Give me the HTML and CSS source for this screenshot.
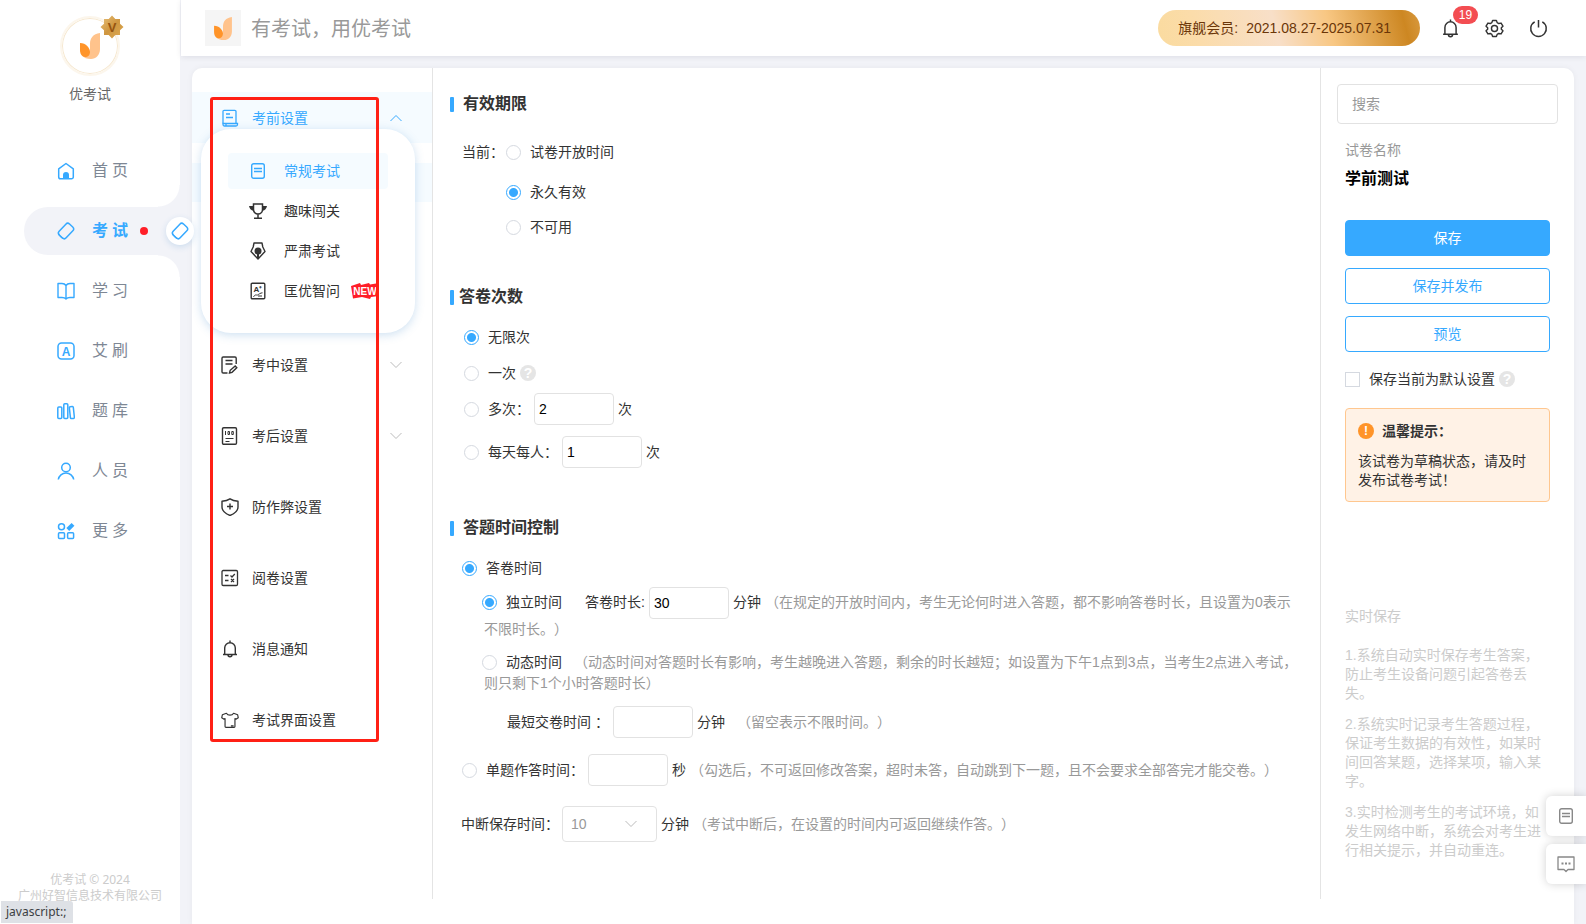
FILE: index.html
```html
<!DOCTYPE html>
<html lang="zh-CN">
<head>
<meta charset="utf-8">
<title>优考试 - 考试设置</title>
<link rel="stylesheet" href="styles.css">
</head>
<body>
<svg class="defs" aria-hidden="true">
  <defs>
    <symbol id="leaf" viewBox="0 0 22 28">
      <path fill="#ffc38c" d="M21 1V17C21 23 17 27 12 27C8 27 5 26 3 23C9 25 11 23 11 17V12C11 6 14 2 21 1Z"/>
      <path fill="#ff9429" d="M1 11C7 11 11 16 11 20C11 23 9 25 6 25C3 25 1 22 1 18Z"/>
    </symbol>
    <symbol id="eraser" viewBox="0 0 18 18">
      <rect x="1.500" y="4.200" width="15" height="9.600" rx="2.600" fill="none" stroke="currentColor" stroke-width="1.500" transform="rotate(-47 9 9)"/>
      <path fill="currentColor" d="M1.600 10c-.9 1.200-.8 2.600.2 3.600l2.400 2.500c1 1 2.500 1.100 3.600.2-3-.8-5.400-3.200-6.200-6.300z"/>
    </symbol>
    <symbol id="bell" viewBox="0 0 18 18">
      <path fill="none" stroke="currentColor" stroke-width="1.400" stroke-linejoin="round" d="M2 14.500h14M3.700 14.300V8a5.300 5.300 0 0 1 10.600 0v6.300M9 .5v2M7 14.800a2 2 0 0 0 4 0"/>
    </symbol>
    <symbol id="sheet" viewBox="0 0 16 18">
      <rect x="1.700" y="1.700" width="12.600" height="14.600" rx="2" fill="none" stroke="currentColor" stroke-width="1.400"/>
      <path stroke="currentColor" stroke-width="1.400" d="M4 6.500h8M4 9.500h8"/>
    </symbol>
    <symbol id="down" viewBox="0 0 12 8">
      <path fill="none" stroke="currentColor" d="M.5 1 6 6.500 11.500 1"/>
    </symbol>
  </defs>
</svg>

<div class="app">
  <aside class="sidebar">
    <div class="profile">
      <div class="avatar">
        <svg class="avatar-logo"><use href="#leaf"/></svg>
        <svg class="medal" viewBox="0 0 24 24">
          <defs><linearGradient id="gold" x1="0" y1="0" x2="1" y2="1"><stop offset="0" stop-color="#e9c27a"/><stop offset=".5" stop-color="#cf9640"/><stop offset="1" stop-color="#dca951"/></linearGradient></defs>
          <path fill="url(#gold)" d="M12 .5l3.300 3.500h4.700v4.700l3.500 3.300-3.500 3.300v4.700h-4.700L12 23.500 8.700 20H4v-4.700L.5 12 4 8.700V4h4.700z"/>
          <text x="12" y="17" text-anchor="middle" class="medal-text">V</text>
        </svg>
      </div>
      <div class="profile-name">优考试</div>
    </div>
    <nav class="nav">
      <a class="nav-item" href="#"><svg viewBox="0 0 18 18"><path fill="none" stroke="currentColor" stroke-width="1.500" stroke-linejoin="round" d="M1.700 6.800 9 1.500l7.300 5.300v8.200a1.800 1.800 0 0 1-1.800 1.800h-11a1.800 1.800 0 0 1-1.800-1.800z"/><path fill="currentColor" d="M6 17v-4a3 3 0 0 1 6 0v4z"/></svg><span>首页</span></a>
      <a class="nav-item active" href="#"><svg><use href="#eraser"/></svg><span>考试</span><i class="dot"></i><b class="knob"><svg><use href="#eraser"/></svg></b></a>
      <a class="nav-item" href="#"><svg viewBox="0 0 18 18"><path fill="none" stroke="currentColor" stroke-width="1.400" stroke-linejoin="round" d="M9 3.500C8 2 6.500 1.500 5 1.500H1v14h4c1.500 0 3 .3 4 1.500 1-1.200 2.500-1.500 4-1.500h4v-14h-4c-1.500 0-3 .5-4 2zM9 3.500V17"/></svg><span>学习</span></a>
      <a class="nav-item" href="#"><svg viewBox="0 0 18 18"><rect x="1" y="1" width="16" height="16" rx="3.500" fill="none" stroke="currentColor" stroke-width="1.500"/><text x="9" y="13.500" text-anchor="middle" class="letter-a">A</text></svg><span>艾刷</span></a>
      <a class="nav-item" href="#"><svg viewBox="0 0 18 18"><g fill="none" stroke="currentColor" stroke-width="1.500"><rect x=".8" y="5" width="4" height="11.500" rx="1"/><rect x="6.800" y="1.800" width="4" height="14.700" rx="1"/><rect x="12.800" y="4.500" width="4" height="12" rx="1" transform="rotate(-6 15 10)"/></g></svg><span>题库</span></a>
      <a class="nav-item" href="#"><svg viewBox="0 0 18 18"><g fill="none" stroke="currentColor" stroke-width="1.500"><circle cx="9" cy="5.500" r="4.300"/><path d="M1.300 17.500a7.800 7.800 0 0 1 15.400 0"/></g></svg><span>人员</span></a>
      <a class="nav-item" href="#"><svg viewBox="0 0 18 18"><g fill="none" stroke="currentColor" stroke-width="1.500"><circle cx="4.500" cy="4.800" r="3"/><rect x="1.500" y="10.800" width="6" height="5.700" rx="1"/><rect x="10.600" y="10.800" width="6" height="5.700" rx="1"/></g><path stroke="currentColor" stroke-width="4" d="m10.800 7.500 5.200-5.200"/></svg><span>更多</span></a>
    </nav>
    <footer class="copyright">优考试 © 2024<br>广州好智信息技术有限公司</footer>
  </aside>

  <div class="page">
    <header class="topbar">
      <div class="brand-logo"><svg><use href="#leaf"/></svg></div>
      <h1 class="brand">有考试，用优考试</h1>
      <div class="member"><span>旗舰会员:</span><span>2021.08.27-2025.07.31</span></div>
      <button class="icon-btn" aria-label="通知"><svg><use href="#bell"/></svg><span class="count">19</span></button>
      <button class="icon-btn" aria-label="设置"><svg viewBox="0 0 20 20"><g fill="none" stroke="currentColor" stroke-width="1.500" stroke-linejoin="round"><path d="M8 1.500h4l.8 2.300 1.700 1 2.400-.5 2 3.300-1.700 1.700v1.400l1.700 1.700-2 3.300-2.400-.5-1.700 1-.8 2.300H8l-.8-2.300-1.700-1-2.400.5-2-3.300 1.700-1.700V9.300L1.100 7.600l2-3.300 2.400.5 1.700-1z"/><circle cx="10" cy="10" r="3.200"/></g></svg></button>
      <button class="icon-btn" aria-label="退出"><svg viewBox="0 0 20 20"><path fill="none" stroke="currentColor" stroke-width="1.600" d="M6 3a8.200 8.200 0 1 0 8 0M10 1v8"/></svg></button>
    </header>

    <main class="card">
      <aside class="menu">
        <a class="menu-item open" href="#"><svg viewBox="0 0 18 18"><g fill="none" stroke="currentColor" stroke-width="1.300"><path d="M2 14.500V2.500A1.200 1.200 0 0 1 3.200 1.300h10.600A1.200 1.200 0 0 1 15 2.500v12"/><path d="M5 5h4M5 8.500h7M2 14.500h14.500v1a1.500 1.500 0 0 1-1.500 1.500H3.500A1.500 1.500 0 0 1 2 15.500zM5 14.500v2.500"/></g></svg><span>考前设置</span><svg class="chev up"><use href="#down"/></svg></a>
        <div class="submenu"><div class="submenu-row"></div></div>
        <a class="menu-item" href="#"><svg viewBox="0 0 18 18"><g fill="none" stroke="currentColor" stroke-width="1.400"><path d="M15.200 8V2.200A1.200 1.200 0 0 0 14 1H2.200A1.200 1.200 0 0 0 1 2.200v13.600A1.200 1.200 0 0 0 2.200 17h4.300M4.500 4.500h7M4.500 8h7"/><path d="m8.500 17 .7-2.700 5-4.300 1.600 1.700-4.800 4.600z"/></g></svg><span>考中设置</span><svg class="chev"><use href="#down"/></svg></a>
        <a class="menu-item" href="#"><svg viewBox="0 0 18 18"><g fill="none" stroke="currentColor"><rect x="1.500" y=".7" width="14" height="16.600" rx="1.200" stroke-width="1.400"/><path d="M4.500 4v4M7 4.500h1.500v3H7zM10.800 4.500h1.500v3h-1.500zM4.500 11.500h8M4.500 14.500h4"/></g></svg><span>考后设置</span><svg class="chev"><use href="#down"/></svg></a>
        <a class="menu-item" href="#"><svg viewBox="0 0 18 18"><g fill="none" stroke="currentColor" stroke-width="1.400" stroke-linejoin="round"><path d="M9 .8C6.500 2.500 4 3 1 3.200V9c0 4.200 3.500 6.700 8 8.500 4.500-1.800 8-4.300 8-8.500V3.200C14 3 11.500 2.500 9 .8zM9 5.500v6M6 8.500h6"/></g></svg><span>防作弊设置</span></a>
        <a class="menu-item" href="#"><svg viewBox="0 0 18 18"><g fill="none" stroke="currentColor" stroke-width="1.300"><rect x="1" y="1.500" width="15.500" height="15" rx="1.200"/><path d="M4 6.500h3.500M4 11.500h3.500M9.500 6.500 11 8l2.800-3M10 10l3 3M13 10l-3 3"/></g></svg><span>阅卷设置</span></a>
        <a class="menu-item" href="#"><svg><use href="#bell"/></svg><span>消息通知</span></a>
        <a class="menu-item" href="#"><svg viewBox="0 0 20 18"><path fill="none" stroke="currentColor" stroke-width="1.300" stroke-linejoin="round" d="M6 1.500 1.500 3.200.8 6.500 3 8l1.500-.5v8.700c0 .6.400 1 1 1h9c.6 0 1-.4 1-1V7.500L17 8l2.200-1.500-.7-3.300L14 1.500a4.500 4 0 0 1-8 0zM11 15.500h3"/></svg><span>考试界面设置</span></a>

        <div class="popup">
          <a class="popup-item active" href="#"><svg><use href="#sheet"/></svg><span>常规考试</span></a>
          <a class="popup-item" href="#"><svg viewBox="0 0 18 18"><path fill="none" stroke="currentColor" stroke-width="1.500" d="M4.500 2h9v5.500a4.500 4.500 0 0 1-9 0zM9 12v4M5 16.300h8"/><path fill="currentColor" d="M0 4h4.500v5C2 8.500.5 6.500 0 4zM18 4h-4.500v5c2.500-.5 4-2.500 4.500-5z"/></svg><span>趣味闯关</span></a>
          <a class="popup-item" href="#"><svg viewBox="0 0 18 18"><path fill="none" stroke="currentColor" stroke-width="1.400" stroke-linejoin="round" d="M5 1h8l.8 4L16 9.500 9 17 2 9.500 4.200 5z"/><circle cx="9" cy="9" r="3.500" fill="currentColor"/><path stroke="currentColor" stroke-width="2" d="M9 9v7"/></svg><span>严肃考试</span></a>
          <a class="popup-item" href="#"><svg viewBox="0 0 18 18"><rect x="2.200" y="1.200" width="13.600" height="15.600" rx="1" fill="none" stroke="currentColor" stroke-width="1.400"/><text x="9" y="9.500" text-anchor="middle" class="tiny-a">A⁺</text><path fill="none" stroke="currentColor" d="M4.500 14.800c2-3 3-1.300 4-1.800s3-2.200 5-2.200M9 14h4"/></svg><span>匡优智问</span>
            <svg class="new" viewBox="0 0 28 16"><path fill="#ff1e28" d="m0 3 9-3 1 2 8-2 1 1.500L28 0v13l-8 1-1 2-8-2-9 1.500z"/><text x="14" y="12" text-anchor="middle" class="new-text">NEW</text></svg></a>
        </div>
        <div class="highlight"></div>
      </aside>

      <form class="content">
        <section class="validity">
          <h2>有效期限</h2>
          <div class="current">
            <span>当前：</span>
            <div class="options">
              <label class="radio"><input type="radio" name="valid">试卷开放时间</label>
              <label class="radio gap-5"><input type="radio" name="valid" checked>永久有效</label>
              <label class="radio"><input type="radio" name="valid">不可用</label>
            </div>
          </div>
        </section>

        <section class="attempts">
          <h2 class="tight">答卷次数</h2>
          <div class="options">
            <label class="radio"><input type="radio" name="times" checked>无限次</label>
            <div class="row"><label class="radio"><input type="radio" name="times">一次</label><span class="help">?</span></div>
            <div class="row"><label class="radio"><input type="radio" name="times">多次：</label><input class="num" type="text" value="2" aria-label="多次">次</div>
            <div class="row gap-7"><label class="radio"><input type="radio" name="times">每天每人：</label><input class="num" type="text" value="1" aria-label="每天每人">次</div>
          </div>
        </section>

        <section class="timing">
          <h2>答题时间控制</h2>
          <label class="radio"><input type="radio" name="mode" checked>答卷时间</label>
          <div class="nested">
            <div class="para"><label class="inline-radio"><input type="radio" name="kind" checked>独立时间</label><label class="duration" for="dur">答卷时长:</label><input class="num" id="dur" type="text" value="30">分钟<span class="hint">（在规定的开放时间内，考生无论何时进入答题，都不影响答卷时长，且设置为0表示不限时长。）</span></div>
            <div class="para second"><label class="inline-radio"><input type="radio" name="kind">动态时间</label><span class="hint wide">（动态时间对答题时长有影响，考生越晚进入答题，剩余的时长越短；如设置为下午1点到3点，当考生2点进入考试，则只剩下1个小时答题时长）</span></div>
            <div class="row shortest"><label for="min">最短交卷时间 ：</label><input class="num" id="min" type="text">分钟<span class="hint wide">（留空表示不限时间。）</span></div>
          </div>
          <div class="row single"><label class="radio"><input type="radio" name="mode">单题作答时间：</label><input class="num" type="text" aria-label="单题作答时间">秒<span class="hint">（勾选后，不可返回修改答案，超时未答，自动跳到下一题，且不会要求全部答完才能交卷。）</span></div>
          <div class="row interrupt"><label for="keep">中断保存时间：</label><div class="select"><select id="keep"><option>10</option></select><svg class="chev"><use href="#down"/></svg></div>分钟<span class="hint">（考试中断后，在设置的时间内可返回继续作答。）</span></div>
        </section>
      </form>

      <aside class="panel">
        <input class="search" type="search" placeholder="搜索" aria-label="搜索">
        <div class="panel-body">
          <div class="paper-label">试卷名称</div>
          <div class="paper-name">学前测试</div>
          <div class="actions">
            <button class="btn primary">保存</button>
            <button class="btn">保存并发布</button>
            <button class="btn">预览</button>
          </div>
          <div class="default"><label class="check"><input type="checkbox">保存当前为默认设置</label><span class="help">?</span></div>
          <div class="alert">
            <div class="alert-title"><span class="bang">!</span>温馨提示：</div>
            <p>该试卷为草稿状态，请及时发布试卷考试！</p>
          </div>
          <div class="notes">
            <h3>实时保存</h3>
            <p>1.系统自动实时保存考生答案，防止考生设备问题引起答卷丢失。</p>
            <p>2.系统实时记录考生答题过程，保证考生数据的有效性，如某时间回答某题，选择某项，输入某字。</p>
            <p>3.实时检测考生的考试环境，如发生网络中断，系统会对考生进行相关提示，并自动重连。</p>
          </div>
        </div>
      </aside>
    </main>
  </div>
</div>

<div class="floaters">
  <button aria-label="文档"><svg><use href="#sheet"/></svg></button>
  <button aria-label="反馈"><svg viewBox="0 0 18 18"><path fill="none" stroke="currentColor" stroke-width="1.300" stroke-linejoin="round" d="M1 2h16v12.500h-6L9 16.500l-2-2H1z"/><path fill="currentColor" d="M4.500 7.500h2v2h-2zM8 7.500h2v2H8zM11.500 7.500h2v2h-2z"/></svg></button>
</div>
<div class="status">javascript:;</div>
</body>
</html>
```
FILE: styles.css
```css
* { box-sizing: border-box; }

body {
  margin: 0;
  background: #f2f3f8;
  color: #333;
  font: 14px/20px "Liberation Sans", "Noto Sans CJK SC", sans-serif;
  text-spacing-trim: space-all;
}

a { color: inherit; text-decoration: none; }
h1, h2, h3, p { margin: 0; }
button, input, select { font: inherit; }
button { cursor: pointer; }
.defs { position: absolute; width: 0; height: 0; }

.app { display: flex; min-height: 100vh; }

/* left navigation */
.sidebar {
  width: 180px;
  flex: none;
  display: flex;
  flex-direction: column;
  background: #fff;
}
.profile { padding-top: 16px; text-align: center; }
.avatar {
  position: relative;
  display: grid;
  place-items: center;
  width: 60px;
  height: 60px;
  margin: 0 auto;
  border: 2px solid #fcf6ec;
  border-radius: 50%;
  box-shadow: inset 0 0 0 1px #f6e8d0;
}
.avatar-logo { width: 22px; height: 28px; }
.medal { position: absolute; top: -3px; right: -6px; width: 24px; height: 24px; }
.medal-text { font: bold 13px "Liberation Sans", sans-serif; fill: #955410; }
.profile-name { margin-top: 8px; color: #666; }

.nav {
  display: flex;
  flex-direction: column;
  gap: 12px;
  margin-top: 43px;
  color: #7e8794;
  font-size: 16px;
}
.nav-item {
  position: relative;
  display: flex;
  align-items: center;
  height: 48px;
  margin-left: 24px;
  padding-left: 33px;
}
.nav-item svg { width: 18px; height: 18px; color: #36a9ff; }
.nav-item span { margin-left: 17px; letter-spacing: 4px; }
.letter-a { font: bold 12px "Liberation Sans", sans-serif; fill: #36a9ff; }
.nav-item.active {
  background: #f2f3f8;
  border-radius: 24px 0 0 24px;
  color: #36a9ff;
  font-weight: bold;
}
.nav-item.active::before,
.nav-item.active::after {
  content: "";
  position: absolute;
  right: 0;
  width: 22px;
  height: 22px;
}
.nav-item.active::before { bottom: 100%; background: radial-gradient(circle at 0 0, #fff 21px, #f2f3f8 22px); }
.nav-item.active::after { top: 100%; background: radial-gradient(circle at 0 100%, #fff 21px, #f2f3f8 22px); }
.dot { width: 8px; height: 8px; margin-left: 8px; border-radius: 50%; background: #ff1e28; }
.knob {
  position: absolute;
  z-index: 2;
  right: -14px;
  top: 10px;
  display: grid;
  place-items: center;
  width: 28px;
  height: 28px;
  border-radius: 50%;
  background: #fff;
  box-shadow: 0 2px 6px rgba(54, 130, 200, .2);
}
.copyright {
  margin-top: auto;
  padding-bottom: 20px;
  color: #ccc;
  font-size: 12px;
  font-family: "Noto Sans", "Noto Sans CJK SC", sans-serif;
  line-height: 16px;
  text-align: center;
  white-space: nowrap;
}

/* header */
.page { flex: 1; min-width: 0; display: flex; flex-direction: column; }
.topbar {
  display: flex;
  align-items: center;
  height: 56px;
  margin-left: 1px;
  padding: 0 38px 0 24px;
  background: #fff;
  box-shadow: 0 1px 6px rgba(0, 0, 40, .09);
}
.brand-logo { display: grid; place-items: center; width: 36px; height: 36px; background: #f5f5f5; }
.brand-logo svg { width: 20px; height: 25px; }
.brand { margin-left: 10px; padding-top: 2px; color: #999; font-size: 20px; font-weight: normal; line-height: 28px; }
.member {
  display: flex;
  gap: 8px;
  margin-left: auto;
  margin-right: 20px;
  padding: 0 29px 0 20px;
  border-radius: 18px;
  background: linear-gradient(75deg, #fadb9f 0%, #fbdcaa 16%, #f8dfc8 45%, #f8c783 65%, #cd8722 93%, #d99a40 100%);
  color: #6b3608;
  line-height: 36px;
  white-space: nowrap;
}
.icon-btn {
  position: relative;
  display: grid;
  place-items: center;
  width: 20px;
  height: 20px;
  margin-right: 24px;
  padding: 0;
  border: 0;
  background: none;
  color: #333;
}
.icon-btn:last-child { margin-right: 0; }
.icon-btn svg { width: 19px; height: 19px; }
.count {
  position: absolute;
  left: 13px;
  top: -12px;
  width: 25px;
  border-radius: 9px;
  background: #f34d52;
  color: #fff;
  font-size: 12px;
  line-height: 18px;
}

/* main card */
.card {
  flex: 1;
  display: flex;
  margin: 12px 12px 0 12px;
  padding-bottom: 25px;
  border-radius: 10px 10px 0 0;
  background: #fff;
  box-shadow: 0 0 6px rgba(0, 0, 40, .05);
}

.menu { position: relative; width: 241px; flex: none; padding-top: 24px; border-right: 1px solid #e4e4e4; }
.menu-item { display: flex; align-items: center; height: 51px; margin-bottom: 20px; padding: 0 30px 0 29px; }
.menu-item svg { width: 18px; height: 18px; }
.menu-item span { margin-left: 13px; }
.menu-item .chev { width: 12px; height: 8px; margin-left: auto; color: #bbb; }
.menu-item.open { margin-bottom: 0; background: #f5fbff; color: #36a9ff; }
.menu-item .chev.up { color: #36a9ff; transform: rotate(180deg); }
.submenu { height: 196px; padding-top: 20px; }
.submenu-row { height: 39px; background: #f5fbff; }

.popup {
  position: absolute;
  top: 61px;
  left: 9px;
  display: flex;
  flex-direction: column;
  gap: 4px;
  width: 214px;
  height: 204px;
  padding: 24px 27px;
  border-radius: 30px;
  background: #fff;
  box-shadow: 0 2px 10px rgba(54, 130, 200, .25);
}
.popup-item { position: relative; display: flex; align-items: center; width: 160px; height: 36px; padding-left: 21px; border-radius: 4px; }
.popup-item.active { background: #f5fbff; color: #36a9ff; }
.popup-item svg { width: 18px; height: 18px; }
.popup-item span { margin-left: 17px; }
.tiny-a { font: bold 8px "Liberation Sans", sans-serif; fill: #333; }
.popup-item .new { position: absolute; left: 123px; width: 28px; height: 16px; }
.new-text { font: bold 10px "Liberation Sans", sans-serif; fill: #fff; }

.highlight {
  position: absolute;
  top: 29px;
  left: 18px;
  width: 169px;
  height: 645px;
  border: 3px solid #ff2015;
  border-radius: 3px;
  pointer-events: none;
}

/* form */
.content { flex: 1; min-width: 0; padding: 24px 20px 0 17px; }
h2 { display: flex; align-items: center; gap: 9px; font-size: 16px; line-height: 24px; font-weight: bold; }
h2.tight { gap: 5px; }
h2::before { content: ""; width: 4px; height: 15px; border-radius: 1px; background: #36a9ff; }

input[type="radio"], input[type="checkbox"] {
  appearance: none;
  flex: none;
  width: 15px;
  height: 15px;
  margin: 0 9px 0 0;
  border: 1px solid #d5d9e0;
  background: #fff;
}
input[type="radio"] { border-radius: 50%; }
input[type="radio"]:checked {
  border-color: #36a9ff;
  background: radial-gradient(circle, #36a9ff 4px, #fff 5px);
}
.radio { display: flex; align-items: center; height: 32px; }
.row { display: flex; align-items: center; min-height: 32px; white-space: nowrap; }
.options { display: flex; flex-direction: column; gap: 3px; }
.gap-5 { margin-top: 5px; }
.gap-7 { margin-top: 7px; }

.current { display: flex; margin: 20px 0 0 12px; gap: 2px; line-height: 32px; }
.attempts { margin-top: 42px; }
.attempts .options { gap: 4px; margin: 12px 0 0 14px; }
.help {
  display: inline-grid;
  place-items: center;
  width: 16px;
  height: 16px;
  margin-left: 4px;
  border-radius: 50%;
  background: #e5e5e5;
  color: #fff;
  font-weight: bold;
  line-height: 16px;
}
.num {
  width: 80px;
  height: 32px;
  margin: 0 4px;
  padding: 0 4px;
  border: 1px solid #e2e2e2;
  border-radius: 4px;
  background: #fff;
  color: #000;
}

.timing { margin-top: 48px; }
.timing > .radio { margin: 12px 0 0 12px; }
.nested { padding-left: 34px; }
.para { margin-top: 3px; line-height: 21px; }
.para .num { vertical-align: middle; }
.para.second { margin-top: 12px; }
.inline-radio input { margin-left: -2px; vertical-align: -3px; }
.duration { margin-left: 23px; }
.hint { margin-left: 4px; color: #999; }
.hint.wide { margin-left: 12px; }
.shortest { margin-top: 12px; padding-left: 23px; }
.single { margin: 16px 0 0 12px; }
.interrupt { margin: 20px 0 0 11px; }
.select { position: relative; margin: 0 4px 0 3px; }
.select select {
  appearance: none;
  width: 95px;
  height: 36px;
  padding: 0 8px;
  border: 1px solid #e2e2e2;
  border-radius: 4px;
  background: #fff;
  color: #999;
}
.select .chev { position: absolute; right: 20px; top: 14px; width: 12px; height: 8px; color: #bbb; pointer-events: none; }

/* right panel */
.panel { width: 254px; flex: none; padding: 16px; border-left: 1px solid #e4e4e4; }
.search {
  width: 100%;
  height: 40px;
  padding: 0 14px;
  border: 1px solid #e2e2e2;
  border-radius: 4px;
  background: #fff;
}
.search::placeholder { color: #999; }
.panel-body { padding: 16px 8px 0; }
.paper-label { color: #999; }
.paper-name { margin-top: 7px; color: #000; font-size: 16px; font-weight: bold; line-height: 24px; }
.actions { display: flex; flex-direction: column; gap: 12px; margin-top: 29px; }
.btn { height: 36px; border: 1px solid #36a9ff; border-radius: 4px; background: #fff; color: #36a9ff; }
.btn.primary { background: #36a9ff; color: #fff; }
.default { display: flex; align-items: center; margin-top: 17px; white-space: nowrap; }
.check { display: flex; align-items: center; }
.alert {
  margin-top: 19px;
  padding: 12px 12px 11px;
  border: 1px solid #ffc78f;
  border-radius: 4px;
  background: #fff2e6;
  line-height: 19px;
}
.alert-title { display: flex; align-items: center; gap: 8px; line-height: 20px; font-weight: bold; }
.alert p { margin-top: 11px; }
.bang { width: 16px; border-radius: 50%; background: #ff9429; color: #fff; font-size: 12px; line-height: 16px; text-align: center; }
.notes { margin-top: 105px; color: #ccc; line-height: 19px; }
.notes h3 { margin-bottom: 20px; font-size: 14px; font-weight: normal; }
.notes p { margin-bottom: 12px; }
.notes p:last-child { margin-bottom: 0; }

.floaters { position: fixed; right: 0; bottom: 40px; display: flex; flex-direction: column; gap: 8px; }
.floaters button {
  display: grid;
  place-items: center;
  width: 40px;
  height: 40px;
  padding: 0;
  border: 0;
  border-radius: 6px 0 0 6px;
  background: #fff;
  box-shadow: 0 0 10px rgba(0, 0, 0, .18);
  color: #888;
}
.floaters svg { width: 18px; height: 18px; }
.status {
  position: fixed;
  left: 1px;
  bottom: 1px;
  padding: 0 7px 0 5px;
  border-radius: 0 3px 0 0;
  background: #dee1e6;
  color: #3c4043;
  font: 12px/22px "Noto Sans", sans-serif;
}
```
